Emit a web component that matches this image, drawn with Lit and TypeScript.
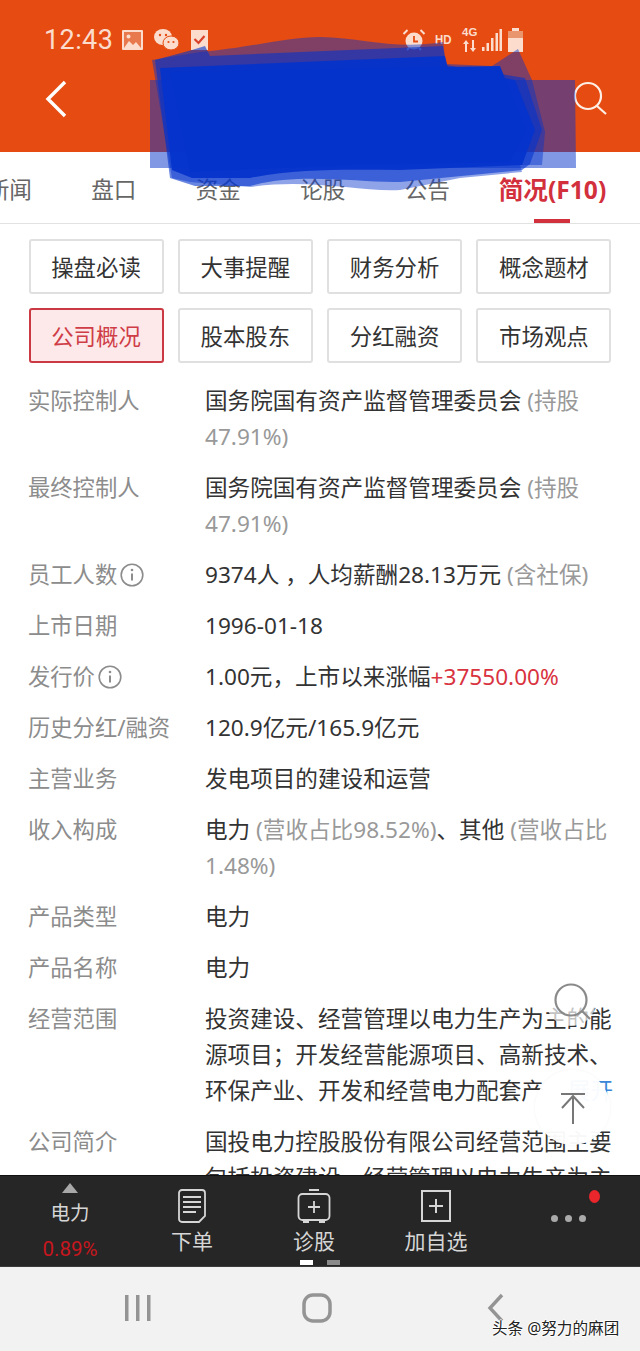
import { LitElement, html, css, svg } from 'lit';
import { customElement } from 'lit/decorators.js';

type Part = { t: string; c?: 'muted' | 'up' };
type Row = { label: string; info?: boolean; parts: Part[]; more?: boolean };

const TABS = ['新闻', '盘口', '资金', '论股', '公告'];
const SECTIONS = ['操盘必读', '大事提醒', '财务分析', '概念题材', '公司概况', '股本股东', '分红融资', '市场观点'];

const ROWS: Row[] = [
  { label: '实际控制人', parts: [{ t: '国务院国有资产监督管理委员会 ' }, { t: '(持股47.91%)', c: 'muted' }] },
  { label: '最终控制人', parts: [{ t: '国务院国有资产监督管理委员会 ' }, { t: '(持股47.91%)', c: 'muted' }] },
  { label: '员工人数', info: true, parts: [{ t: '9374人 ，人均薪酬28.13万元 ' }, { t: '(含社保)', c: 'muted' }] },
  { label: '上市日期', parts: [{ t: '1996-01-18' }] },
  { label: '发行价', info: true, parts: [{ t: '1.00元，上市以来涨幅' }, { t: '+37550.00%', c: 'up' }] },
  { label: '历史分红/融资', parts: [{ t: '120.9亿元/165.9亿元' }] },
  { label: '主营业务', parts: [{ t: '发电项目的建设和运营' }] },
  { label: '收入构成', parts: [{ t: '电力 ' }, { t: '(营收占比98.52%)', c: 'muted' }, { t: '、其他 ' }, { t: '(营收占比1.48%)', c: 'muted' }] },
  { label: '产品类型', parts: [{ t: '电力' }] },
  { label: '产品名称', parts: [{ t: '电力' }] },
  { label: '经营范围', more: true, parts: [{ t: '投资建设、经营管理以电力生产为主的能源项目；开发经营能源项目、高新技术、环保产业、开发和经营电力配套产' }] },
  { label: '公司简介', parts: [{ t: '国投电力控股股份有限公司经营范围主要包括投资建设、经营管理以电力生产为主的能源项目；开发经营能源项目' }] },
];

const infoIcon = svg`<svg class="info" width="24" height="24" viewBox="0 0 24 24" fill="none" stroke="#8c8c8c" stroke-width="1.6">
  <circle cx="12" cy="12" r="10.8"/><path d="M12 10.5v7" stroke-width="2"/><circle cx="12" cy="7" r="1.3" fill="#8c8c8c" stroke="none"/></svg>`;

@customElement('app-root')
export class AppRoot extends LitElement {
  static styles = css`
    :host {
      display: block;
      position: relative;
      width: 640px;
      height: 1351px;
      overflow: hidden;
      background: #fff;
      font-family: 'Noto Sans', 'Noto Sans CJK SC', sans-serif;
      color: #333;
    }
    .page { display: flex; flex-direction: column; height: 1351px; }

    .top { height: 152px; flex: none; background: #e64c12; color: #fbdccd; position: relative; }
    .status { display: flex; align-items: center; height: 80px; padding: 0 0 0 44px; }
    .clock { font-family: Roboto, sans-serif; font-size: 27px; width: 78px; letter-spacing: 0.4px; }
    .status svg { display: block; flex: none; }
    .bar { display: flex; justify-content: space-between; align-items: center; padding: 0 32px 0 44px; }

    .tabs { display: flex; height: 71px; flex: none; margin-left: -43px; font-size: 22.6px; color: #666; border-bottom: 0; }
    .tab { width: 104.5px; flex: none; text-align: center; line-height: 76px; }
    .tab.on { width: 124px; margin-left: 11px; color: #d2303c; font-weight: 700; font-size: 24.6px; position: relative; white-space: nowrap; }
    .tab.on::after { content: ''; position: absolute; left: 43px; bottom: 0; width: 36px; height: 4px; background: #d2303c; }
    .rule { height: 1px; flex: none; background: #e2e2e2; }

    .scroll { flex: 1; min-height: 0; overflow: hidden; }
    .sections { display: grid; grid-template-columns: repeat(4, 135px); gap: 14px 14.3px; padding: 15px 0 0 28.5px; }
    .sec {
      height: 55px; box-sizing: border-box; border: 2px solid #e0e0e0; border-radius: 3px;
      display: flex; align-items: center; justify-content: center; font-size: 22.4px; color: #333;
    }
    .sec.on { background: #fde9e9; border-color: #cb3a44; color: #cf3d47; }

    .rows { display: flex; flex-direction: column; gap: 15px; padding: 20px 27px 0 28px; }
    .row { display: grid; grid-template-columns: 177px 408px; line-height: 36px; font-size: 22.6px; }
    .label { color: #8c8c8c; font-size: 22.3px; display: flex; align-items: flex-start; gap: 3px; white-space: nowrap; line-height: 35px; }
    .info { margin-top: 6px; }
    .muted { color: #999; }
    .up { color: #d9333f; }
    .more { color: #3a86d8; float: right; }

    .dock {
      height: 91px; flex: none; background: #262626; color: #d6d6d6; border-top: 1px solid #111;
      box-sizing: border-box; display: grid; grid-template-columns: repeat(5, 122px); padding-left: 9px; position: relative;
    }
    .dock-item { display: flex; flex-direction: column; align-items: center; font-size: 21px; }
    .dock-item svg { display: block; margin-top: 12px; height: 36px; }
    .dock-item span { line-height: 30px; margin-top: 2px; }
    .quote { font-size: 19.5px; }
    .quote svg { margin-top: 6px; height: 12px; }
    .quote span { line-height: 30px; margin-top: 4px; }
    .quote b { font-weight: 400; color: #c8161e; font-size: 20.5px; line-height: 30px; margin-top: 6px; font-family: Roboto, sans-serif; }
    .more-item { position: relative; padding-left: 21px; }
    .dots { display: flex; gap: 7px; margin: 39px 0 0 0; }
    .dots i { width: 7px; height: 7px; border-radius: 50%; background: #aaa; }
    .badge { position: absolute; left: 92px; top: 14px; width: 11px; height: 13px; border-radius: 50%; background: #e8262c; }
    .pager { position: absolute; left: 300px; bottom: 1px; display: flex; gap: 14px; }
    .pager i { width: 13px; height: 5px; background: #8a8a8a; }
    .pager i:first-child { background: #fff; }

    .nav { height: 85px; flex: none; background: #f2f2f2; border-top: 1px solid #3a3a3a; box-sizing: border-box; display: grid; grid-template-columns: 179px 179px 179px; padding-left: 48px; align-items: center; justify-items: center; }
    .nav svg { display: block; margin-bottom: 3px; }

    .mask { position: absolute; left: 0; top: 0; pointer-events: none; }
    .float { position: absolute; pointer-events: none; }
    .float.lens { left: 546px; top: 976px; width: 50px; height: 50px; border-radius: 50%; background: rgba(255, 255, 255, 0.7); }
    .float.lens svg { display: block; }
    .float.top-btn { left: 535px; top: 1070px; width: 75px; height: 75px; border-radius: 50%; background: rgba(255, 255, 255, 0.96); box-shadow: 0 0 3px rgba(0, 0, 0, 0.06); display: flex; align-items: center; justify-content: center; }
    .mark {
      position: absolute; left: 492px; top: 1317px; font-size: 15.6px; line-height: 22px; color: #222; white-space: nowrap;
      text-shadow: 1px 0 0 #fff, -1px 0 0 #fff, 0 1px 0 #fff, 0 -1px 0 #fff;
    }
  `;

  private statusBar() {
    return html`<div class="status">
      <span class="clock">12:43</span>
      <svg width="21" height="20" viewBox="0 0 21 20"><rect width="21" height="20" rx="1" fill="#fbdccd"/><rect x="2" y="2" width="17" height="16" fill="#e8784d"/><path d="M2 18l5-7 4 4 3-3 5 6z" fill="#fbdccd"/><circle cx="6.5" cy="6.5" r="2" fill="#fbdccd"/></svg>
      <svg style="margin-left:11px" width="25" height="24" viewBox="0 0 25 24" fill="#fbdccd"><ellipse cx="9" cy="9" rx="9" ry="8"/><ellipse cx="17" cy="15" rx="8" ry="7" stroke="#e64c12"/><circle cx="6" cy="7" r="1.2" fill="#e64c12"/><circle cx="12" cy="7" r="1.2" fill="#e64c12"/><circle cx="14.5" cy="14" r="1.1" fill="#e64c12"/><circle cx="19.5" cy="14" r="1.1" fill="#e64c12"/></svg>
      <svg style="margin-left:12px" width="17" height="20" viewBox="0 0 17 20"><rect width="17" height="20" fill="#fbdccd"/><path d="M3.5 9l4 4 6-7" fill="none" stroke="#d9412a" stroke-width="2.2"/></svg>
      <svg style="margin-left:194px" width="24" height="24" viewBox="0 0 24 24"><circle cx="12" cy="13" r="8.5" fill="#fbdccd"/><path d="M12 8v5.500h4" fill="none" stroke="#e64c12" stroke-width="1.8"/><path d="M1.500 6l4-4M22.500 6l-4-4M5 22l2-2M19 22l-2-2" stroke="#fbdccd" stroke-width="2"/></svg>
      <span style="margin-left:9px;font:700 13.500px/1 'Liberation Sans',sans-serif;transform:scaleX(.85);transform-origin:left;width:17px">HD</span>
      <svg style="margin-left:10px" width="16" height="24" viewBox="0 0 16 24" fill="#fbdccd"><path d="M3 24v-8H1l3-4 3 4H5v8zM12 12v8h2l-3 4-3-4h2v-8z"/></svg>
      <span style="margin:-14px 0 0 -16px;font:700 11.500px/1 'Liberation Sans',sans-serif;width:16px">4G</span>
      <svg style="margin-left:4px" width="20" height="22" viewBox="0 0 20 22" fill="#fbdccd"><rect x="0" y="18" width="2.500" height="4"/><rect x="4.500" y="14" width="2.500" height="8"/><rect x="9" y="9" width="2.500" height="13"/><rect x="13.500" y="4" width="2.500" height="18"/><rect x="17.500" y="0" width="2.500" height="22"/></svg>
      <svg style="margin-left:6px" width="15" height="24" viewBox="0 0 15 24"><path d="M4 0h7v3h4v21H0V3h4z" fill="#fbdccd"/><rect x="0" y="3" width="15" height="7" fill="#e9966f"/></svg>
    </div>`;
  }

  private titleBar() {
    return html`<div class="bar">
      <svg width="24" height="38" viewBox="0 0 24 38" fill="none" stroke="#fff" stroke-width="3.400"><path d="M21 2L4 19l17 17"/></svg>
      <svg width="36" height="36" viewBox="0 0 36 36" fill="none" stroke="#fdeee6" stroke-width="2.200"><circle cx="16" cy="15" r="13"/><path d="M25 25l9 8"/></svg>
    </div>`;
  }

  // blue marker strokes across the title area
  private marker() {
    return svg`<svg class="mask" width="640" height="210" viewBox="0 0 640 210" fill="#0433cc">
      <path fill-opacity=".5" d="M150 80H575L576 168H150z"/>
      <path fill-opacity=".45" d="M200 52C250 48 285 37 320 37C365 38 395 50 443 42L446 64L492 66L518 49L532 80L545 132L542 165L520 165L522 172L460 178L400 190C360 192 310 178 250 187L190 182L172 178L152 60z"/>
      <path fill-opacity=".6" d="M155 60L192 50L205 46L210 56L443 46L446 65L525 78L542 130L530 164L522 170L400 182C360 183 300 172 250 186L195 186L170 178z"/>
      <path fill-opacity=".92" d="M160 68L445 56L448 68L515 80L535 130L522 165L400 170C350 170 300 168 250 178L192 178L172 170z"/>
      <path d="M170 72L500 66L526 130L510 162L350 165L190 172z"/>
    </svg>`;
  }

  private renderRow(r: Row) {
    return html`<div class="row">
      <div class="label">${r.label}${r.info ? infoIcon : ''}</div>
      <div>
        ${r.parts.map((p) => html`<span class=${p.c ?? ''}>${p.t}</span>`)}
        ${r.more ? html`<span class="more">展开</span>` : ''}
      </div>
    </div>`;
  }

  private dock() {
    return html`<div class="dock">
      <div class="dock-item quote">
        <svg width="18" height="12" viewBox="0 0 18 12"><path d="M9 1l8 10H1z" fill="#a8a8a8"/></svg>
        <span>电力</span>
        <b>0.89%</b>
      </div>
      <div class="dock-item">
        <svg width="30" height="36" viewBox="0 0 30 36" fill="none" stroke="#d6d6d6" stroke-width="1.800"><path d="M5 2h20a3 3 0 0 1 3 3v23l-6 6H5a3 3 0 0 1-3-3V5a3 3 0 0 1 3-3z"/><path d="M6 9h18M6 14h18M6 19h18M6 24h13"/></svg>
        <span>下单</span>
      </div>
      <div class="dock-item">
        <svg width="34" height="36" viewBox="0 0 34 36" fill="none" stroke="#d6d6d6" stroke-width="1.800"><rect x="1.500" y="6" width="31" height="26" rx="4"/><path d="M12 2h10M17 13v12M11 19h12M6 34h6M22 34h6"/></svg>
        <span>诊股</span>
      </div>
      <div class="dock-item">
        <svg width="30" height="36" viewBox="0 0 30 36" fill="none" stroke="#d6d6d6" stroke-width="2"><rect x="1" y="3" width="28" height="30"/><path d="M15 11v14M8 18h14"/></svg>
        <span>加自选</span>
      </div>
      <div class="dock-item more-item">
        <div class="dots"><i></i><i></i><i></i></div>
        <div class="badge"></div>
      </div>
      <div class="pager"><i></i><i></i></div>
    </div>`;
  }

  render() {
    return html`<div class="page">
        <div class="top">${this.statusBar()}${this.titleBar()}</div>
        <div class="tabs">
          ${TABS.map((t) => html`<div class="tab">${t}</div>`)}
          <div class="tab on">简况(F10)</div>
        </div>
        <div class="rule"></div>
        <div class="scroll">
          <div class="sections">
            ${SECTIONS.map((s) => html`<div class="sec ${s === '公司概况' ? 'on' : ''}">${s}</div>`)}
          </div>
          <div class="rows">${ROWS.map((r) => this.renderRow(r))}</div>
        </div>
        ${this.dock()}
        <div class="nav">
          <svg width="28" height="28" viewBox="0 0 28 28" fill="#949494"><rect x="1" y="1" width="3.500" height="26"/><rect x="12" y="1" width="3.500" height="26"/><rect x="23" y="1" width="3.500" height="26"/></svg>
          <svg width="30" height="30" viewBox="0 0 30 30" fill="none" stroke="#949494" stroke-width="3.500"><rect x="2" y="2" width="26" height="26" rx="9"/></svg>
          <svg width="18" height="30" viewBox="0 0 18 30" fill="none" stroke="#949494" stroke-width="3.400"><path d="M15 2L3 15l12 13"/></svg>
        </div>
      </div>
      ${this.marker()}
      <div class="float lens">
        <svg width="50" height="50" viewBox="0 0 50 50" fill="none" stroke="#8a8a8a" stroke-width="2.200"><circle cx="25" cy="24" r="15.500"/><path d="M36 35l8 8"/></svg>
      </div>
      <div class="float top-btn">
        <svg width="26" height="32" viewBox="0 0 26 32" fill="none" stroke="#777" stroke-width="2"><path d="M1 2h24M13 32V4M2 16L13 4l11 12"/></svg>
      </div>
      <div class="mark">头条 @努力的麻团</div>`;
  }
}
